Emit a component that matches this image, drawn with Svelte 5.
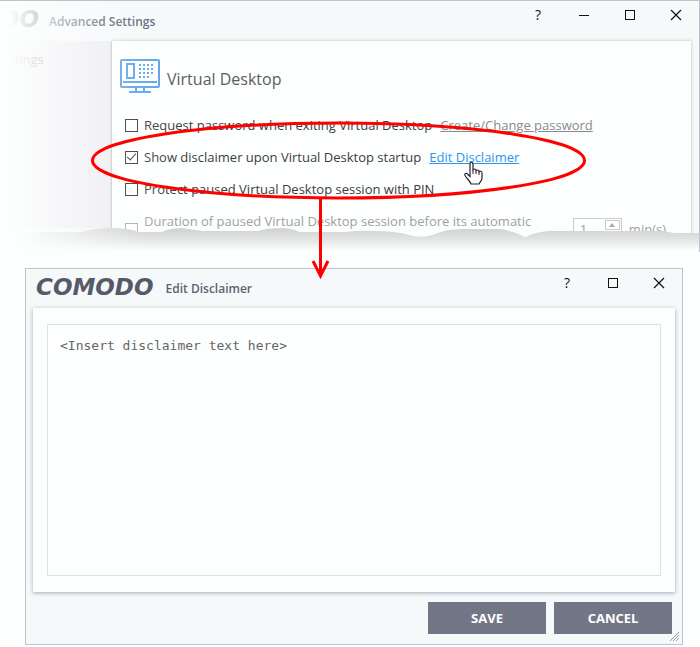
<script lang="ts">
  let options = $state([
    { id: 'password', label: 'Request password when exiting Virtual Desktop', checked: false, link: 'Create/Change password', active: false },
    { id: 'disclaimer', label: 'Show disclaimer upon Virtual Desktop startup', checked: true, link: 'Edit Disclaimer', active: true },
    { id: 'pin', label: 'Protect paused Virtual Desktop session with PIN', checked: false, link: '', active: false },
  ]);
  let duration = $state(false);
  let minutes = $state('1');
  let text = $state('<Insert disclaimer text here>');

  const dots = [0, 1, 2, 3].flatMap((r) => [0, 1, 2, 3].map((c) => ({ r, c }))).filter((d) => !(d.r === 3 && d.c === 3));
</script>

{#snippet controls(names: string[])}
  <div class="controls">
    {#each names as name}
      <button type="button" aria-label={name}>
        {#if name === 'Help'}
          ?
        {:else}
          <svg width="12" height="12" viewBox="0 0 12 12" fill="none" stroke="#111">
            {#if name === 'Minimize'}
              <path d="M1 6.5h10" />
            {:else if name === 'Maximize'}
              <rect x="1.5" y="1.5" width="9" height="9" />
            {:else}
              <path d="M1 1l10 10M11 1L1 11" stroke-width="1.2" />
            {/if}
          </svg>
        {/if}
      </button>
    {/each}
  </div>
{/snippet}

<main>
  <section class="window settings">
    <header>
      <span class="logo cut">DO</span>
      <h1>Advanced Settings</h1>
      {@render controls(['Help', 'Minimize', 'Maximize', 'Close'])}
    </header>
    <div class="body">
      <nav>
        <span>ttings</span>
        <span>e Settings</span>
      </nav>
      <div class="content">
        <h2>
          <svg width="40" height="36" viewBox="0 0 40 36" fill="none" stroke="#5aa2e8" stroke-width="2">
            <rect x="1" y="1" width="38" height="27" rx="1" />
            <rect x="7" y="5" width="7" height="14" />
            <path d="M3 23h34M16 28v5M24 28v5M9 33h22" />
            {#each dots as d}
              <rect x={19 + d.c * 4} y={5 + d.r * 4} width="2" height="2" fill="#5aa2e8" stroke="none" />
            {/each}
          </svg>
          <span>Virtual Desktop</span>
        </h2>
        {#each options as o}
          <div class="option">
            <input type="checkbox" id={o.id} bind:checked={o.checked} />
            <label for={o.id}>{o.label}</label>
            {#if o.link}<a href="#{o.id}" class:active={o.active}>{o.link}</a>{/if}
          </div>
        {/each}
        <div class="option off">
          <input type="checkbox" id="duration" bind:checked={duration} />
          <label for="duration">Duration of paused Virtual Desktop session before its automatic</label>
          <div class="spin">
            <input type="text" aria-label="Minutes" bind:value={minutes} />
            <button type="button" aria-label="Increase"><svg width="6" height="4" viewBox="0 0 6 4"><path d="M0 4l3-4 3 4z" fill="#aaa" /></svg></button>
          </div>
          <span class="unit">min(s)</span>
        </div>
      </div>
    </div>
    <div class="fade"></div>
    <svg class="tear" viewBox="0 0 700 28" preserveAspectRatio="none" aria-hidden="true">
      <defs>
        <linearGradient id="shade" x1="0" y1="0" x2="0" y2="1">
          <stop offset="0.1" stop-color="#d3d4d4" />
          <stop offset="0.5" stop-color="#e4e5e5" />
          <stop offset="0.95" stop-color="#fdfefe" />
        </linearGradient>
        <linearGradient id="side">
          <stop offset="0.1" stop-color="#fdfefe" />
          <stop offset="1" stop-color="#fdfefe" stop-opacity="0" />
        </linearGradient>
      </defs>
      <path d="M0 9L82 8Q94 4 112 4Q130 4 139 8L162 8Q170 4 182 4L202 7H258Q268 4 280 4Q292 4 300 8H346Q358 6 374 7Q394 7 406 10Q420 15 433 11Q446 5 462 5H502Q516 8 526 13Q536 8 550 7H664L674 9H700V28H0z" fill="url(#shade)" />
      <path d="M0 4H150V28H0z" fill="url(#side)" />
    </svg>
  </section>

  <section class="window dialog">
    <header>
      <span class="logo">COMODO</span>
      <h1>Edit Disclaimer</h1>
      {@render controls(['Help', 'Maximize', 'Close'])}
    </header>
    <div class="panel">
      <textarea aria-label="Disclaimer text" spellcheck="false" bind:value={text}></textarea>
    </div>
    <footer>
      <button type="button">SAVE</button>
      <button type="button">CANCEL</button>
    </footer>
    <svg class="grip" width="9" height="9" viewBox="0 0 9 9" stroke="#8f9cb8" fill="none"><path d="M0 9L9 0M3 9L9 3M6 9L9 6" /></svg>
  </section>

  <svg class="marks" width="700" height="290" viewBox="0 0 700 290" fill="none" aria-hidden="true">
    <ellipse cx="338.5" cy="160.5" rx="246" ry="37.5" stroke="#f00" stroke-width="3" />
    <path d="M320.5 198V275" stroke="#f00" stroke-width="3" />
    <path d="M313 261L320.5 276L328 261" stroke="#f00" stroke-width="3" />
    <path d="M470 164.5c0-3 3-3 3 0v6c0-2 3-2 3 0v1c0-2 3-2 3 0v1c0-2 3-1.5 3 .5v5c0 3-2 4-3 6h-8c-1-3-4-5-6-8.5c-1-2 1.5-3 3-1l2 2z" fill="#fff" stroke="#223" stroke-width="1.2" />
    <path d="M473 170v4M476 171v3M479 172v3" stroke="#223" />
  </svg>
</main>

<style>
  :global(body) { margin: 0; background: #fdfefe; }
  main { position: relative; overflow: hidden; padding-bottom: 2px; font: 13px/20px "Open Sans", "Noto Sans", sans-serif; color: #3c3c40; }
  button, input, textarea { font: inherit; color: inherit; box-sizing: border-box; margin: 0; }
  .window { position: relative; box-sizing: border-box; background: #f6f9fa; border: 1px solid #bcc3ce; }
  header { display: flex; align-items: flex-start; height: 39px; }
  h1 { flex: 1; margin: 0; padding-top: 10px; font-size: 12px; line-height: 20px; font-weight: 600; color: #5c6272; }
  .logo { padding-top: 8px; font: italic bold 23px/20px "DejaVu Sans", sans-serif; color: #565a68; }
  .controls { display: flex; }
  .controls button { display: flex; align-items: center; justify-content: center; width: 46px; height: 28px; padding: 0; border: 0; background: none; color: #111; font-size: 14px; }

  .settings { height: 252px; border-left: 0; border-bottom: 0; overflow: hidden; }
  .settings header { height: 40px; }
  .settings h1 { padding-top: 11px; }
  .cut { width: 39px; margin-right: 10px; display: flex; justify-content: flex-end; }
  .body { display: flex; height: 211px; padding-right: 8px; }
  nav { width: 112px; flex: none; box-sizing: border-box; padding: 8px 0 0 4px; display: flex; flex-direction: column; gap: 155px; background: #eeeef1; color: #777; border-right: 1px solid #dcdfe3; }
  nav span { padding-left: 6px; white-space: nowrap; }
  .content { flex: 1; min-width: 0; padding: 18px 12px 0 13px; background: #fdfefe; box-shadow: 0 0 3px rgba(60, 70, 90, .35); white-space: nowrap; }
  h2 { display: flex; align-items: center; gap: 7px; height: 36px; margin: 0 0 14px -5px; font-size: 16px; line-height: 24px; font-weight: 400; color: #5c5c60; }
  h2 span { padding-top: 4px; }
  .option { display: flex; align-items: center; height: 32px; }
  .option label { margin: 0 8px 0 6px; }
  input[type="checkbox"] { appearance: none; position: relative; flex: none; width: 13px; height: 13px; border: 1px solid #333; background: #fff; }
  input[type="checkbox"]:checked::after { content: ""; position: absolute; left: 1px; top: 1px; width: 8px; height: 4px; border: solid #333; border-width: 0 0 1px 1px; transform: rotate(-48deg); }
  a { color: #8a8a8e; }
  a.active { color: #2f95ea; }
  .off { align-items: flex-start; color: #a0a0a4; }
  .off label { flex: 1; padding-top: 6px; }
  .off input[type="checkbox"] { margin-top: 18px; border-color: #aaa; }
  .spin { display: flex; width: 49px; height: 22px; margin: 13px 7px 0 0; box-sizing: border-box; border: 1px solid #ccc; padding: 1px; }
  .spin input { flex: 1; min-width: 0; border: 0; background: none; padding: 0 5px; }
  .spin button { display: flex; align-items: center; justify-content: center; width: 15px; height: 10px; padding: 0; border: 1px solid #ccc; background: #fff; }
  .unit { padding-top: 14px; margin-right: 13px; }
  .fade { position: absolute; inset: -1px auto 0 0; width: 180px; background: linear-gradient(to right, #fdfefe 5%, rgba(253, 254, 254, .75) 22%, rgba(253, 254, 254, .2) 60%, rgba(253, 254, 254, 0)); pointer-events: none; }
  .tear { position: absolute; left: 0; bottom: 0; width: 100%; height: 28px; }

  .dialog { margin: 16px 17px 0 25px; }
  .dialog .logo { padding-left: 10px; margin-right: 12px; }
  .panel { margin: 0 7px; padding: 16px 14px; background: #fdfefe; box-shadow: 0 1px 4px rgba(60, 70, 90, .45); }
  textarea { display: block; width: 100%; height: 252px; padding: 11px 12px; border: 1px solid #e0e3e6; background: #fdfefe; color: #66666a; font: 13px/20px "DejaVu Sans Mono", monospace; resize: none; outline: 0; }
  footer { display: flex; justify-content: flex-end; gap: 8px; padding: 10px; }
  footer button { width: 118px; height: 32px; border: 0; background: #727787; color: #fff; font-weight: 700; }
  .grip { position: absolute; right: 3px; bottom: 3px; }
  .marks { position: absolute; left: 0; top: 0; pointer-events: none; }
</style>
